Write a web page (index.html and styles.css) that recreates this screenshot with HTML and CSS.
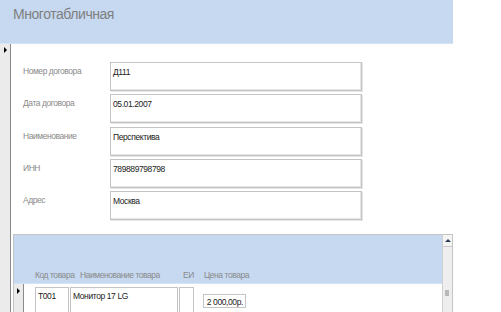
FILE: index.html
```html
<!DOCTYPE html>
<html lang="ru">
<head>
<meta charset="utf-8">
<title>Многотабличная</title>
<link rel="stylesheet" href="styles.css">
</head>
<body>
<div class="window">
  <header class="head"><h1 class="title">Многотабличная</h1></header>
  <div class="body">
    <div class="selector"><span class="pointer"></span></div>
    <main class="detail">
      <div class="fields">
        <div class="label">Номер договора</div><div class="box">Д111</div>
        <div class="label">Дата договора</div><div class="box">05.01.2007</div>
        <div class="label">Наименование</div><div class="box">Перспектива</div>
        <div class="label">ИНН</div><div class="box">789889798798</div>
        <div class="label">Адрес</div><div class="box">Москва</div>
      </div>
      <section class="sub">
        <div class="sub-main">
          <div class="sub-head">
            <span class="col c1">Код товара</span>
            <span class="col c2">Наименование товара</span>
            <span class="col c3">ЕИ</span>
            <span class="col c4">Цена товара</span>
          </div>
          <div class="sub-row">
            <div class="selector sub-sel"><span class="pointer"></span></div>
            <div class="cell k1">Т001</div>
            <div class="cell k2">Монитор 17 LG</div>
            <div class="cell k3"></div>
            <div class="cell k4">2 000,00р.</div>
          </div>
        </div>
        <div class="scroll">
          <div class="sbtn"><span class="up"></span></div>
          <div class="track"><span class="thumb"></span></div>
        </div>
      </section>
    </main>
  </div>
</div>
</body>
</html>
```
FILE: styles.css
```css
html, body { margin: 0; padding: 0; background: #fff; }
body { font-family: "Liberation Sans", Arial, sans-serif; width: 501px; height: 312px; overflow: hidden; }
.window { width: 453px; display: flex; flex-direction: column; height: 312px; }
.head { flex: 0 0 auto; height: 43px; background: #c6d9f1; border-bottom: 1px solid #d6e3f5; }
.title { margin: 0; padding: 6px 0 0 13px; font-weight: normal; font-size: 14px; letter-spacing: -0.45px; color: #7f7f7f; line-height: 16px; }
.body { flex: 1; display: flex; min-height: 0; }
.selector { flex: 0 0 auto; width: 10px; background: #ebebeb; border-right: 1px solid #8a8a8a; position: relative; }
.pointer { position: absolute; left: 4px; top: 3px; width: 0; height: 0; border-top: 3px solid transparent; border-bottom: 3px solid transparent; border-left: 3px solid #000; }
.detail { flex: 1; display: flex; flex-direction: column; padding: 18px 0 0 2px; min-height: 0; }
.fields { flex: 0 0 auto; display: grid; grid-template-columns: 87px 252px; row-gap: 3.25px; padding-left: 10px; }
.label { font-size: 8.5px; color: #8a8a8a; padding-top: 4px; letter-spacing: -0.45px; }
.box { border: 1px solid #c4c4c4; box-shadow: inset -1px -1px 0 #e6e6e6, 1px 1px 0 #e6e6e6; font-size: 8.5px; color: #222; padding: 4px 0 0 2px; box-sizing: border-box; height: 29px; letter-spacing: -0.4px; }
.sub { margin-top: 14px; flex: 1; display: flex; border: 1px solid #c4c4c4; border-bottom: 0; min-height: 0; }
.sub-main { flex: 1; display: flex; flex-direction: column; }
.sub-head { flex: 0 0 auto; height: 48px; background: #c6d9f1; border-bottom: 1px solid #d6e3f5; position: relative; }
.col { position: absolute; top: 35px; font-size: 8.5px; color: #8a8a8a; letter-spacing: -0.45px; white-space: nowrap; }
.c1 { left: 21px; } .c2 { left: 66px; } .c3 { left: 169px; } .c4 { left: 190px; }
.sub-row { flex: 1; display: flex; align-items: flex-start; }
.sub-sel { width: 9px; align-self: stretch; }
.sub-sel .pointer { left: 3px; top: 4px; }
.cell { flex: 0 0 auto; border: 1px solid #c4c4c4; box-sizing: border-box; font-size: 8.5px; color: #222; padding: 3px 0 0 2px; height: 40px; margin-top: 3px; letter-spacing: -0.4px; }
.k1 { margin-left: 11px; width: 34px; }
.k2 { margin-left: 1px; width: 108px; }
.k3 { margin-left: 1px; width: 15px; }
.k4 { margin-left: 9px; width: 43px; height: 14px; margin-top: 10px; text-align: right; padding: 2px 2px 0 0; }
.scroll { flex: 0 0 auto; width: 9px; border-left: 1px solid #d0d0d0; background: #f0f0f0; display: flex; flex-direction: column; }
.sbtn { height: 11px; border-bottom: 1px solid #c8c8c8; background: #f4f4f4; position: relative; }
.up { position: absolute; left: 2px; top: 4px; width: 0; height: 0; border-left: 3px solid transparent; border-right: 3px solid transparent; border-bottom: 3px solid #2b3a55; }
.track { flex: 1; position: relative; background: #eeeeee; }
.thumb { position: absolute; left: 2px; top: 43px; width: 4px; height: 6px; background: #b8b8b8; }
```
